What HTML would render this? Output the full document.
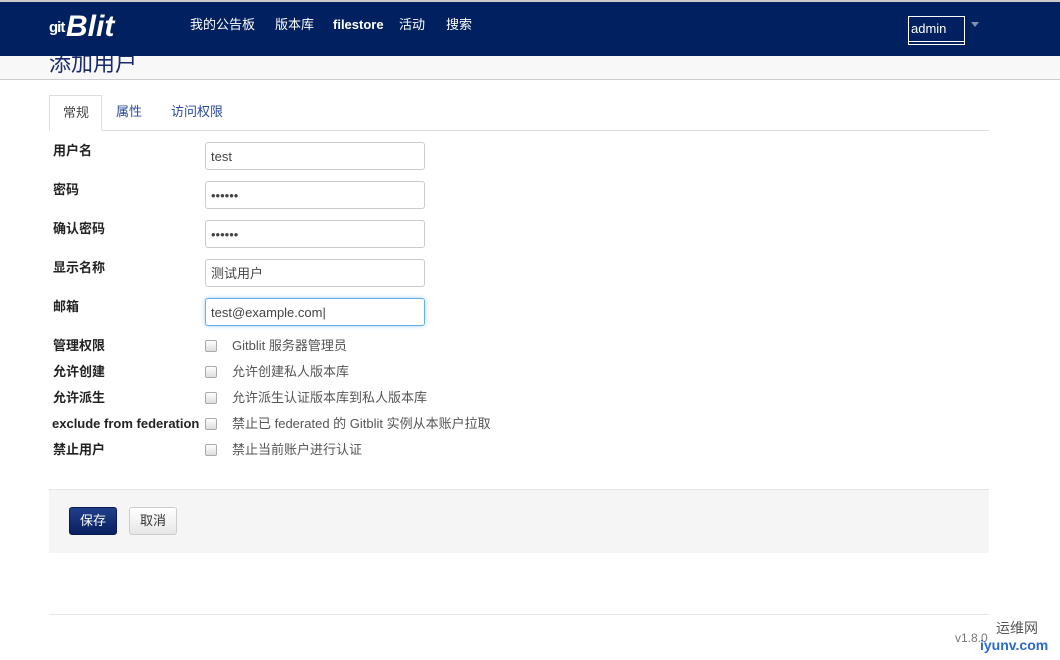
<!DOCTYPE html>
<html><head><meta charset="utf-8"><style>
*{box-sizing:border-box;margin:0;padding:0}
body{width:1060px;height:660px;overflow:hidden;background:#fff;font-family:"Liberation Sans","Noto Sans CJK SC",sans-serif;font-size:13px;color:#333;position:relative}
.top{position:absolute;left:0;top:0;width:1060px;height:2px;background:#ccc}
.nav{position:absolute;left:0;top:2px;width:1060px;height:54px;background:#002060}
.logo{position:absolute;left:66px;top:8px;color:#fff;font-size:30px;font-weight:bold;font-style:italic;line-height:34px}
.g{position:absolute;left:49px;top:18px;color:#fff;font-size:15px;font-weight:bold;line-height:16px;letter-spacing:-1px}
.nav a{position:absolute;top:15px;color:#fff;font-size:13px;line-height:16px;text-decoration:none}
.user{position:absolute;left:908px;top:14px;width:57px;height:29px;border:1px solid #fff;color:#fff;font-size:13px;padding:5px 0 0 2px;line-height:14px}
.user:after{content:"";position:absolute;left:0;right:0;top:24px;border-top:1px solid #fff}
.caret{position:absolute;left:971px;top:20px;border:4px solid transparent;border-top:5px solid #8090b0}
.sub{position:absolute;left:0;top:56px;width:1060px;height:24px;background:#f8f8f8;border-bottom:1px solid #ccc;overflow:hidden}
.sub h1{position:absolute;left:49px;top:-5px;font-size:22px;line-height:26px;font-weight:normal;color:#1a2a6a}
.tabs{position:absolute;left:49px;top:130px;width:940px;border-top:1px solid #ddd}
.tab{position:absolute;top:104px;font-size:13px;line-height:16px;color:#2a4a9a}
.tab.act{left:49px;top:95px;width:53px;height:36px;border:1px solid #ddd;border-bottom:1px solid #fff;background:#fff;color:#444;padding:9px 0 0 13px}
.lbl{position:absolute;left:53px;font-weight:bold;color:#222;font-size:13px;line-height:16px}
.inp{position:absolute;left:205px;width:220px;height:28px;border:1px solid #ccc;border-radius:3px;padding:6px 0 0 5px;font-size:13px;line-height:16px;color:#444}
.cb{position:absolute;left:205px;width:12px;height:12px;border:1px solid #aaa;border-radius:2px;background:linear-gradient(#fff,#ddd)}
.ct{position:absolute;left:232px;color:#555;font-size:13px;line-height:16px}
.actions{position:absolute;left:49px;top:489px;width:940px;height:64px;background:#f5f5f5;border-top:1px solid #e5e5e5}
.btn{position:absolute;top:507px;height:28px;width:48px;border-radius:3px;font-size:13px;text-align:center;line-height:26px}
.foot{position:absolute;left:49px;top:614px;width:940px;border-top:1px solid #e5e5e5}
</style></head><body>
<div class="top"></div>
<div class="nav">
<div class="g">git</div>
<div class="logo">Blit</div>
<a style="left:190px">我的公告板</a>
<a style="left:275px">版本库</a>
<a style="left:333px;font-weight:bold">filestore</a>
<a style="left:399px">活动</a>
<a style="left:446px">搜索</a>
<div class="user">admin</div>
<div class="caret"></div>
</div>
<div class="sub"><h1>添加用户</h1></div>
<div class="tabs"></div>
<div class="tab act">常规</div>
<div class="tab" style="left:116px">属性</div>
<div class="tab" style="left:171px">访问权限</div>

<div class="lbl" style="top:143px">用户名</div>
<div class="inp" style="top:142px">test</div>
<div class="lbl" style="top:182px">密码</div>
<div class="inp" style="top:181px">••••••</div>
<div class="lbl" style="top:221px">确认密码</div>
<div class="inp" style="top:220px">••••••</div>
<div class="lbl" style="top:260px">显示名称</div>
<div class="inp" style="top:259px">测试用户</div>
<div class="lbl" style="top:299px">邮箱</div>
<div class="inp" style="top:298px;border-color:#66afe9;box-shadow:0 0 4px rgba(102,175,233,.6)">test@example.com|</div>

<div class="lbl" style="top:338px">管理权限</div><div class="cb" style="top:340px"></div><div class="ct" style="top:338px">Gitblit 服务器管理员</div>
<div class="lbl" style="top:364px">允许创建</div><div class="cb" style="top:366px"></div><div class="ct" style="top:364px">允许创建私人版本库</div>
<div class="lbl" style="top:390px">允许派生</div><div class="cb" style="top:392px"></div><div class="ct" style="top:390px">允许派生认证版本库到私人版本库</div>
<div class="lbl" style="top:416px;left:52px">exclude from federation</div><div class="cb" style="top:418px"></div><div class="ct" style="top:416px">禁止已 federated 的 Gitblit 实例从本账户拉取</div>
<div class="lbl" style="top:442px">禁止用户</div><div class="cb" style="top:444px"></div><div class="ct" style="top:442px">禁止当前账户进行认证</div>

<div class="actions"></div>
<div class="btn" style="left:69px;background:linear-gradient(#1f3f8a,#0a2060);color:#fff;border:1px solid #0a1a50">保存</div>
<div class="btn" style="left:129px;background:linear-gradient(#fff,#e6e6e6);color:#333;border:1px solid #ccc">取消</div>
<div class="foot"></div>
<div style="position:absolute;left:955px;top:631px;color:#777;font-size:12px">v1.8.0</div>
<div style="position:absolute;left:996px;top:618px;color:#555;font-size:14px">运维网</div>
<div style="position:absolute;left:980px;top:637px;color:#2a6acc;font-size:14px;font-weight:bold">iyunv.com</div>
</body></html>
